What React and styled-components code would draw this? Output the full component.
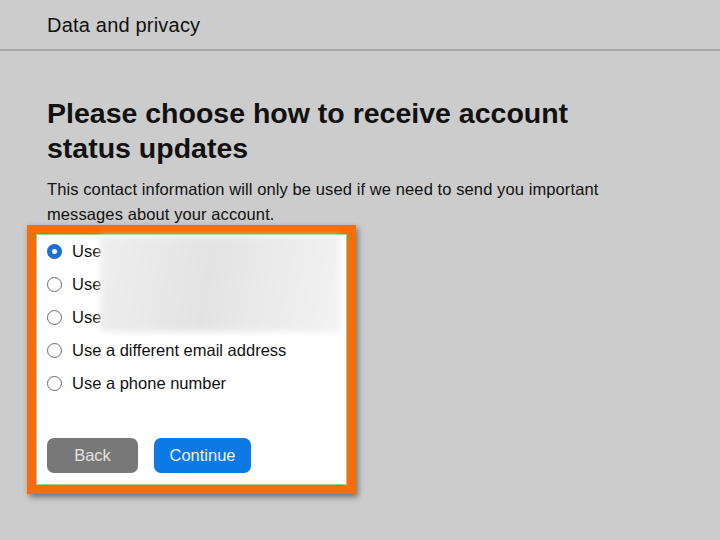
import styled, { createGlobalStyle } from 'styled-components';

const GlobalStyle = createGlobalStyle`
  html, body {
    margin: 0;
    padding: 0;
    background: #cccccc;
  }
  body {
    font-family: 'Liberation Sans', Arial, sans-serif;
    color: #111;
  }
`;

const Page = styled.div`
  width: 720px;
  height: 540px;
  background: #cccccc;
  overflow: hidden;
`;

const Header = styled.header`
  height: 51px;
  display: flex;
  align-items: center;
  padding: 2px 47px 0;
  box-sizing: border-box;
  border-bottom: 2px solid #a8a8a8;
  font-size: 20px;
  font-weight: 500;
  letter-spacing: 0.2px;
`;

const Main = styled.main`
  padding: 45px 47px 0;
`;

const Title = styled.h1`
  margin: 0;
  font-size: 28.5px;
  line-height: 35px;
  font-weight: 600;
  letter-spacing: 0;
  width: 600px;
`;

const Lead = styled.p`
  margin: 11px 0 0;
  font-size: 16.5px;
  line-height: 25px;
  letter-spacing: 0.1px;
  width: 600px;
`;

const Highlight = styled.section`
  width: 329px;
  margin: -2px 0 0 -20px;
  box-sizing: border-box;
  border: 9px solid #f76d0c;
  box-shadow: 2px 3px 6px rgba(0, 0, 0, 0.45);
`;

const Panel = styled.div`
  background: #ffffff;
  border: 1px solid #9fd08f;
  padding: 0 10px 11px;
  display: flex;
  flex-direction: column;
`;

const Options = styled.div`
  position: relative;
`;

const Option = styled.label`
  height: 33px;
  display: flex;
  align-items: center;
  gap: 10px;
  font-size: 16.5px;
`;

const Radio = styled.span`
  width: 15px;
  height: 15px;
  box-sizing: border-box;
  border-radius: 50%;
  display: flex;
  align-items: center;
  justify-content: center;
  border: ${({ checked }) => (checked ? 'none' : '1px solid #6b6b6b')};
  background: ${({ checked }) => (checked ? '#1b6fd6' : '#fff')};

  &::after {
    content: '';
    display: ${({ checked }) => (checked ? 'block' : 'none')};
    width: 5px;
    height: 5px;
    border-radius: 50%;
    background: #fff;
  }
`;

const Redacted = styled.div`
  position: absolute;
  top: 1px;
  left: 53px;
  width: 240px;
  height: 96px;
  background: linear-gradient(100deg, #efefef 0%, #e3e3e3 45%, #ebebeb 70%, #f2f2f2 100%);
  filter: blur(3px);
`;

const Actions = styled.div`
  display: flex;
  gap: 16px;
  margin-top: 38px;
`;

const Button = styled.button`
  height: 35px;
  padding: 0;
  border: none;
  border-radius: 7px;
  font-family: inherit;
  font-size: 16.5px;
  color: ${({ primary }) => (primary ? '#e9f3ff' : '#e2e2e2')};
  background: ${({ primary }) => (primary ? '#0c79e4' : '#787878')};
  width: ${({ primary }) => (primary ? '97px' : '91px')};
`;

const options = [
  { label: 'Use', checked: true },
  { label: 'Use' },
  { label: 'Use' },
  { label: 'Use a different email address' },
  { label: 'Use a phone number' },
];

export default function App() {
  return (
    <Page>
      <GlobalStyle />
      <Header>Data and privacy</Header>
      <Main>
        <Title>Please choose how to receive account status updates</Title>
        <Lead>
          This contact information will only be used if we need to send you important
          messages about your account.
        </Lead>
        <Highlight>
          <Panel>
            <Options>
              {options.map((o, i) => (
                <Option key={i}>
                  <Radio checked={o.checked} />
                  {o.label}
                </Option>
              ))}
              <Redacted />
            </Options>
            <Actions>
              <Button>Back</Button>
              <Button primary>Continue</Button>
            </Actions>
          </Panel>
        </Highlight>
      </Main>
    </Page>
  );
}
